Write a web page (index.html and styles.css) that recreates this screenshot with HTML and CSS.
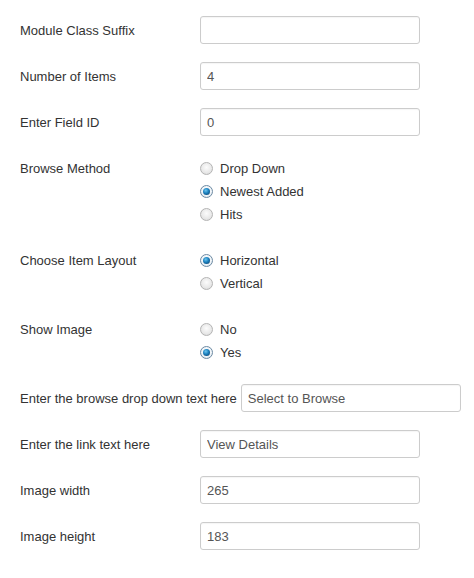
FILE: index.html
```html
<!DOCTYPE html>
<html>
<head>
<meta charset="utf-8">
<link rel="stylesheet" href="styles.css">
</head>
<body>
<form class="form">
  <div class="row">
    <label class="label">Module Class Suffix</label>
    <input class="field" type="text" value="">
  </div>
  <div class="row">
    <label class="label">Number of Items</label>
    <input class="field" type="text" value="4">
  </div>
  <div class="row">
    <label class="label">Enter Field ID</label>
    <input class="field" type="text" value="0">
  </div>
  <div class="row row-radio">
    <label class="label">Browse Method</label>
    <div class="radios">
      <div class="opt"><span class="radio"></span>Drop Down</div>
      <div class="opt"><span class="radio on"></span>Newest Added</div>
      <div class="opt"><span class="radio"></span>Hits</div>
    </div>
  </div>
  <div class="row row-radio">
    <label class="label">Choose Item Layout</label>
    <div class="radios">
      <div class="opt"><span class="radio on"></span>Horizontal</div>
      <div class="opt"><span class="radio"></span>Vertical</div>
    </div>
  </div>
  <div class="row row-radio">
    <label class="label">Show Image</label>
    <div class="radios">
      <div class="opt"><span class="radio"></span>No</div>
      <div class="opt"><span class="radio on"></span>Yes</div>
    </div>
  </div>
  <div class="row">
    <label class="label">Enter the browse drop down text here</label>
    <input class="field" type="text" value="Select to Browse">
  </div>
  <div class="row">
    <label class="label">Enter the link text here</label>
    <input class="field" type="text" value="View Details">
  </div>
  <div class="row">
    <label class="label">Image width</label>
    <input class="field" type="text" value="265">
  </div>
  <div class="row">
    <label class="label">Image height</label>
    <input class="field" type="text" value="183">
  </div>
</form>
</body>
</html>
```

FILE: styles.css
```css
html, body {
  margin: 0;
  padding: 0;
  background: #fff;
}
body {
  font-family: "Liberation Sans", Arial, sans-serif;
  font-size: 13px;
  color: #333;
}
.form {
  padding: 16px 0 0 20px;
}
.row {
  display: flex;
  align-items: center;
  margin-bottom: 18px;
}
.row-radio {
  align-items: flex-start;
}
.label {
  flex: 0 0 auto;
  min-width: 180px;
  padding-top: 2px;
  padding-right: 4px;
  box-sizing: border-box;
  white-space: nowrap;
  line-height: 18px;
}
.row-radio .label {
  padding-top: 6px;
}
.field {
  box-sizing: border-box;
  width: 220px;
  height: 28px;
  margin: 0;
  padding: 4px 6px;
  border: 1px solid #ccc;
  border-radius: 3px;
  background: #fff;
  font-family: "Liberation Sans", Arial, sans-serif;
  font-size: 13px;
  color: #555;
  box-shadow: inset 0 1px 1px rgba(0,0,0,0.04);
  outline: none;
}
.radios {
  display: flex;
  flex-direction: column;
  padding-top: 3px;
  padding-bottom: 2px;
}
.opt {
  display: flex;
  align-items: center;
  height: 23px;
  line-height: 23px;
}
.radio {
  box-sizing: border-box;
  width: 13px;
  height: 13px;
  margin-right: 7px;
  border-radius: 50%;
  border: 1px solid #b4b4b4;
  background: radial-gradient(circle at 50% 40%, #fcfcfc 0%, #e8e8e8 60%, #d4d4d4 100%);
  position: relative;
  flex: 0 0 auto;
}
.radio.on {
  border-color: #6d8aa3;
  background: radial-gradient(circle at 50% 40%, #fff 0%, #eef3f7 60%, #cdd9e3 100%);
}
.radio.on::after {
  content: "";
  position: absolute;
  left: 2px;
  top: 2px;
  width: 7px;
  height: 7px;
  border-radius: 50%;
  background: radial-gradient(circle at 40% 35%, #6cc6f0 0%, #1a7fbd 45%, #0c355e 100%);
}
```
